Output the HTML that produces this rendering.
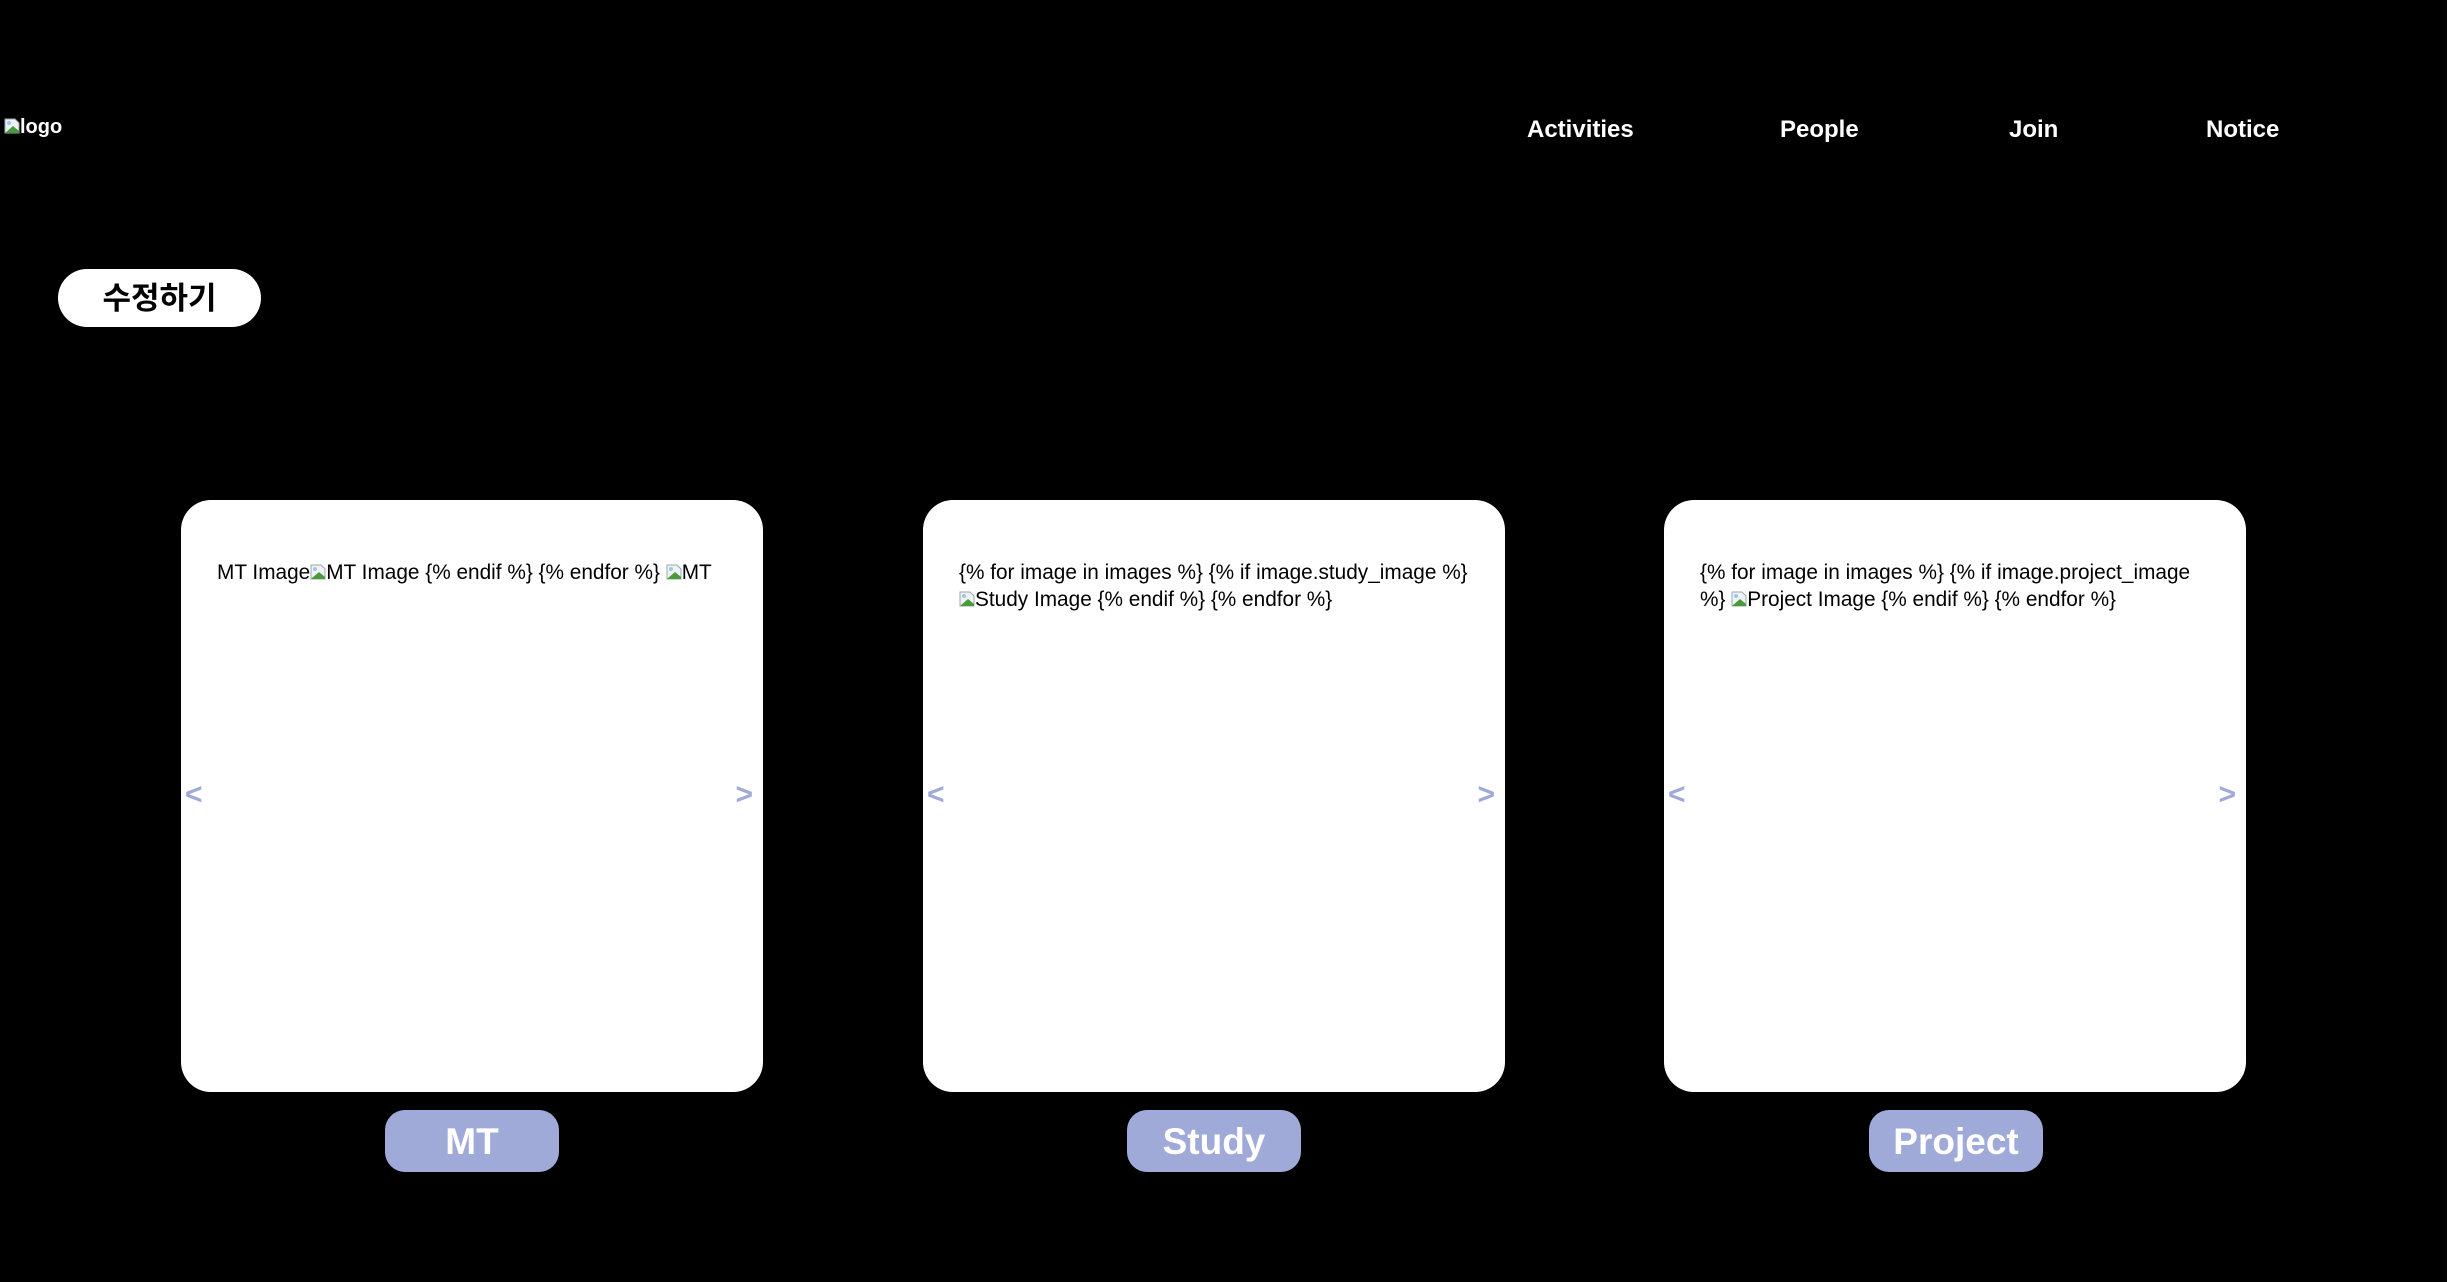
<!DOCTYPE html>
<html><head><meta charset="utf-8"><style>
html,body{margin:0;padding:0;background:#000;width:2452px;height:1282px;overflow:hidden;font-family:"Liberation Sans","Noto Sans CJK KR",sans-serif;}
.abs{position:absolute;}
.nav{color:#fff;font-weight:bold;font-size:24px;top:116px;}
.card{position:absolute;top:500px;width:582px;height:592px;background:#fff;border-radius:30px;}
.txt{position:absolute;left:36px;top:59px;font-size:20.8px;line-height:27px;color:#000;white-space:nowrap;}
.arr{position:absolute;top:278px;font-size:30px;color:#a0aad8;font-weight:bold;}
.lbl{position:absolute;top:1110px;width:174px;height:62px;background:#a0aad8;border-radius:20px;color:#fff;font-weight:bold;font-size:37px;text-align:center;line-height:64px;}
.bi{display:inline-block;width:16px;height:16px;vertical-align:-1px;}
</style></head><body>
<svg width="0" height="0" style="position:absolute"><defs><symbol id="b" viewBox="0 0 16 16"><path d="M1 1h10l4 4v10H1z" fill="#eef2f6" stroke="#9aa" stroke-width="1"/><path d="M1 15l8-7 6 5v2z" fill="#4a9a3a"/><circle cx="5" cy="5" r="2" fill="#9cc8e8"/></symbol></defs></svg>
<div class="abs" style="left:4px;top:116px;color:#fff;font-weight:bold;font-size:20px;"><svg class="bi"><use href="#b"/></svg>logo</div>
<div class="abs nav" style="left:1527px">Activities</div>
<div class="abs nav" style="left:1780px">People</div>
<div class="abs nav" style="left:2009px">Join</div>
<div class="abs nav" style="left:2206px">Notice</div>
<div class="abs" style="left:2447px;top:0;width:5px;height:1282px;background:#fff"></div>
<div class="abs" style="left:58px;top:269px;width:203px;height:58px;background:#fff;border-radius:29px;text-align:center;line-height:60px;font-size:31px;font-weight:bold;color:#000;">수정하기</div>

<div class="card" style="left:181px">
<div class="txt" style="left:36px">MT Image<svg class="bi"><use href="#b"/></svg>MT Image {% endif %} {% endfor %} <svg class="bi"><use href="#b"/></svg>MT</div>
<div class="arr" style="left:4px">&lt;</div><div class="arr" style="right:10px">&gt;</div></div>
<div class="lbl" style="left:385px">MT</div>

<div class="card" style="left:923px">
<div class="txt">{% for image in images %} {% if image.study_image %}<br><svg class="bi"><use href="#b"/></svg>Study Image {% endif %} {% endfor %}</div>
<div class="arr" style="left:4px">&lt;</div><div class="arr" style="right:10px">&gt;</div></div>
<div class="lbl" style="left:1127px">Study</div>

<div class="card" style="left:1664px">
<div class="txt">{% for image in images %} {% if image.project_image<br>%} <svg class="bi"><use href="#b"/></svg>Project Image {% endif %} {% endfor %}</div>
<div class="arr" style="left:4px">&lt;</div><div class="arr" style="right:10px">&gt;</div></div>
<div class="lbl" style="left:1869px">Project</div>
</body></html>
